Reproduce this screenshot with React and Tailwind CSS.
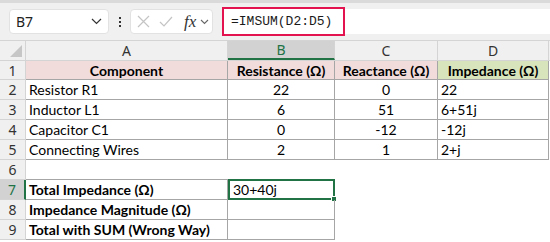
import React from 'react'

const cols = [
  { key: 'A', w: 'w-[202px]' },
  { key: 'B', w: 'w-[107px]' },
  { key: 'C', w: 'w-[103px]' },
  { key: 'D', w: 'w-[111px]' },
]

const data = [
  ['Resistor R1', '22', '0', '22'],
  ['Inductor L1', '6', '51', '6+51j'],
  ['Capacitor C1', '0', '-12', '-12j'],
  ['Connecting Wires', '2', '1', '2+j'],
]

const summary = ['Total Impedance (Ω)', 'Impedance Magnitude (Ω)', 'Total with SUM (Wrong Way)']

const cellFont = { fontFamily: 'Lato, "Open Sans", sans-serif' }

const RowHead = ({ n, active }) => (
  <div
    className={`w-[26px] shrink-0 h-full flex items-center justify-center text-[14px] border-r border-b border-[#d4d4d4] ${
      active ? 'bg-[#d2d2d2] text-[#217346] border-r-2 border-r-[#217346]' : 'bg-[#f0f0f0] text-[#333]'
    }`}
    style={{ fontFamily: '"Noto Sans", sans-serif' }}
  >
    {n}
  </div>
)

export default function App() {
  return (
    <div className="w-[550px] h-[242px] overflow-hidden bg-white select-none">
      {/* formula bar */}
      <div className="h-[41px] bg-[#f0f0f0] border-t-[3px] border-[#dadada] border-b border-b-[#d4d4d4] flex items-center relative">
        <div className="ml-[9px] w-[100px] h-[25px] bg-white rounded-[4px] border border-[#e2e2e2] flex items-center justify-between pl-[6px] pr-[6px]">
          <span className="text-[14px] text-[#222]" style={{ fontFamily: '"Noto Sans", sans-serif' }}>B7</span>
          <svg width="11" height="7" viewBox="0 0 11 7" fill="none" stroke="#333" strokeWidth="1.2">
            <path d="M1 1l4.5 4.5L10 1" />
          </svg>
        </div>
        <div className="w-[21px] flex flex-col items-center gap-[2px]">
          <span className="w-[2px] h-[2px] bg-[#333]" />
          <span className="w-[2px] h-[2px] bg-[#333]" />
          <span className="w-[2px] h-[2px] bg-[#333]" />
        </div>
        <div className="w-[83px] h-[25px] bg-white rounded-[4px] border border-[#e2e2e2] flex items-center pl-[6px] gap-[9px]">
          <svg width="13" height="13" viewBox="0 0 13 13" stroke="#c4c4c4" strokeWidth="1.2">
            <path d="M1 1l11 11M12 1L1 12" />
          </svg>
          <svg width="14" height="11" viewBox="0 0 14 11" fill="none" stroke="#c4c4c4" strokeWidth="1.2">
            <path d="M1 6l4 4 8-9" />
          </svg>
          <span className="italic text-[17px] text-[#333] leading-none ml-[2px]" style={{ fontFamily: '"Liberation Serif", serif' }}>
            fx
          </span>
          <svg width="9" height="6" viewBox="0 0 9 6" fill="none" stroke="#666" strokeWidth="1.1" className="-ml-[5px]">
            <path d="M1 1l3.5 3.5L8 1" />
          </svg>
        </div>
        <div className="ml-[9px] flex-1 h-[25px] bg-white flex items-center">
          <div className="h-[29px] w-[123px] border-2 border-[#e2134f] flex items-center pl-[7px]">
            <span className="text-[13px] text-[#1a1a1a]" style={{ fontFamily: '"Liberation Mono", monospace' }}>
              =IMSUM(D2:D5)
            </span>
          </div>
        </div>
      </div>

      {/* column headers */}
      <div className="h-[19px] flex bg-[#f0f0f0]">
        <div className="w-[26px] shrink-0 h-full border-r border-[#d4d4d4] relative">
          <svg width="12" height="12" viewBox="0 0 12 12" className="absolute right-[3px] bottom-[3px]">
            <path d="M12 0V12H0Z" fill="#c6c6c6" />
          </svg>
        </div>
        {cols.map((c) => (
          <div
            key={c.key}
            className={`${c.w} shrink-0 h-full flex items-center justify-center text-[14px] border-r border-[#d4d4d4] ${
              c.key === 'B' ? 'bg-[#d2d2d2] text-[#217346] border-b-2 border-b-[#217346]' : 'text-[#333]'
            }`}
            style={{ fontFamily: '"Noto Sans", sans-serif' }}
          >
            {c.key}
          </div>
        ))}
        <div className="flex-1" />
      </div>

      {/* row 1 */}
      <div className="h-[20px] flex text-[14px] text-black border-t border-[#d4d4d4]" style={cellFont}>
        <RowHead n="1" />
        <div className="w-[202px] shrink-0 bg-[#f2dcdb] border-r border-b border-[#a6a6a6] flex items-center justify-center font-bold">Component</div>
        <div className="w-[107px] shrink-0 bg-[#f2dcdb] border-r border-b border-[#a6a6a6] flex items-center justify-center font-bold">Resistance (Ω)</div>
        <div className="w-[103px] shrink-0 bg-[#f2dcdb] border-r border-b border-[#a6a6a6] flex items-center justify-center font-bold">Reactance (Ω)</div>
        <div className="w-[111px] shrink-0 bg-[#d8e4bc] border-r border-b border-[#a6a6a6] flex items-center justify-center font-bold">Impedance (Ω)</div>
      </div>

      {data.map((r, i) => (
        <div key={i} className="h-[20px] flex text-[14px] text-black" style={cellFont}>
          <RowHead n={i + 2} />
          <div className="w-[202px] shrink-0 border-r border-b border-[#a6a6a6] flex items-center pl-[3px]">{r[0]}</div>
          <div className="w-[107px] shrink-0 border-r border-b border-[#a6a6a6] flex items-center justify-center">{r[1]}</div>
          <div className="w-[103px] shrink-0 border-r border-b border-[#a6a6a6] flex items-center justify-center">{r[2]}</div>
          <div className="w-[111px] shrink-0 border-r border-b border-[#a6a6a6] flex items-center pl-[3px]">{r[3]}</div>
        </div>
      ))}

      {/* row 6 */}
      <div className="h-[20px] flex">
        <RowHead n="6" />
        <div className="w-[309px] shrink-0 border-b border-[#a6a6a6]" />
      </div>

      {summary.map((label, i) => (
        <div key={i} className="h-[20px] flex text-[14px] text-black" style={cellFont}>
          <RowHead n={i + 7} active={i === 0} />
          <div className="w-[202px] shrink-0 border-r border-b border-[#a6a6a6] flex items-center pl-[3px] font-bold">{label}</div>
          <div
            className={`w-[107px] shrink-0 flex items-center pl-[3px] relative ${
              i === 0 ? 'border-2 border-[#217346] -mt-[1px] h-[21px]' : 'border-r border-b border-[#a6a6a6]'
            }`}
          >
            {i === 0 && '30+40j'}
            {i === 0 && <span className="absolute -right-[4px] -bottom-[4px] w-[6px] h-[6px] bg-[#217346] border border-white" />}
          </div>
        </div>
      ))}
    </div>
  )
}
